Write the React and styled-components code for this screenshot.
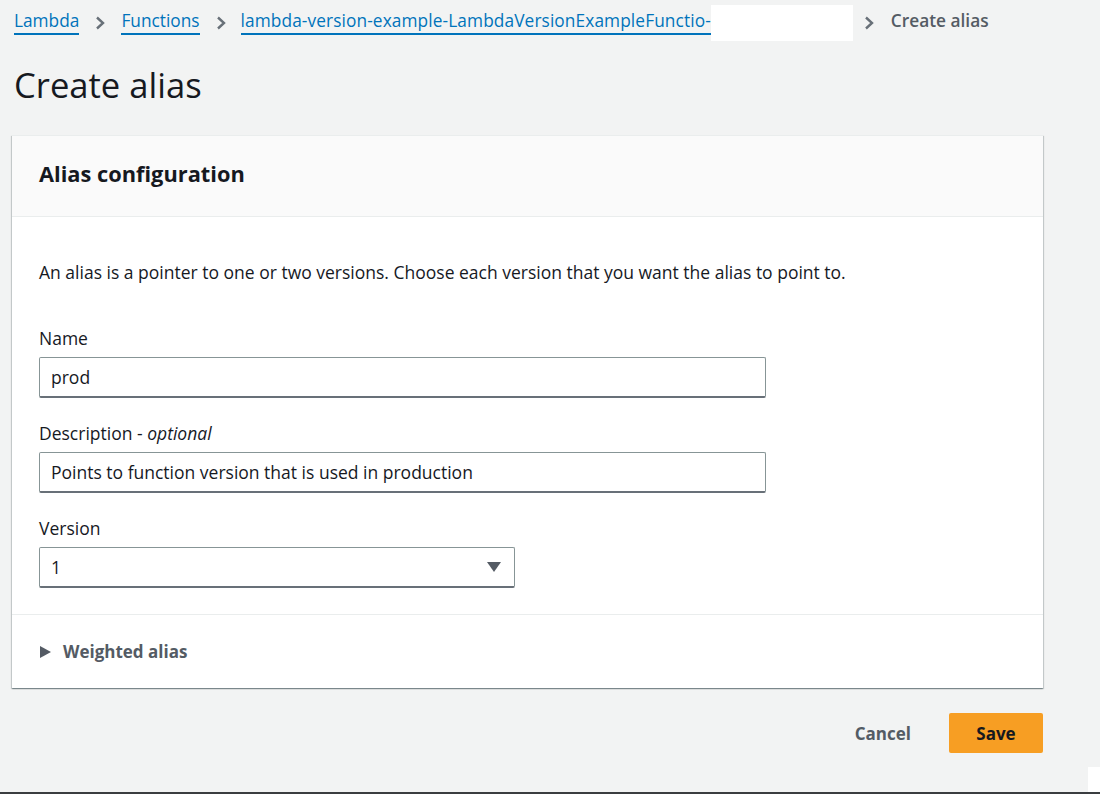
import React from 'react';
import styled, { createGlobalStyle } from 'styled-components';

const GlobalStyle = createGlobalStyle`
  html, body {
    margin: 0;
    padding: 0;
    background: #f2f3f3;
  }
  body {
    font-family: "Open Sans", "Noto Sans", Arial, sans-serif;
    color: #16191f;
  }
`;

const Page = styled.div`
  width: 1100px;
  height: 794px;
  box-sizing: border-box;
  padding: 8px 57px 0 12px;
  position: relative;
  overflow: hidden;
  border-bottom: 2px solid #3a3d40;
`;

const Crumbs = styled.nav`
  display: flex;
  align-items: center;
  height: 30px;
  padding-left: 2px;
  font-size: 17.3px;
`;

const Crumb = styled.a`
  color: #0073bb;
  text-decoration: none;
  border-bottom: 2px solid #0073bb;
  line-height: 20px;
  padding-bottom: 2px;
  white-space: nowrap;
  letter-spacing: ${(p) => (p.$wide ? '0.1px' : '0')};
`;

const Redact = styled.span`
  display: inline-block;
  width: 142px;
  height: 36px;
  background: #fff;
`;

const Current = styled.span`
  color: #545b64;
  font-weight: 600;
  line-height: 20px;
  padding-bottom: 4px;
`;

const Chevron = styled.svg`
  width: 12px;
  height: 14px;
  margin: 0 ${(p) => p.$gap || 10}px 0 ${(p) => p.$left || 10}px;
  flex: none;
`;

const Title = styled.h1`
  margin: 26px 0 0 2px;
  font-size: 34.6px;
  font-weight: 400;
  line-height: 42px;
  color: #16191f;
`;

const Card = styled.section`
  margin-top: 29px;
  background: #fff;
  box-shadow: 0 1px 1px 0 rgba(0, 28, 36, 0.3), 1px 1px 1px 0 rgba(0, 28, 36, 0.15),
    -1px 1px 1px 0 rgba(0, 28, 36, 0.15);
  border-top: 1px solid #eaeded;
`;

const CardHeader = styled.header`
  height: 80px;
  background: #fafafa;
  border-bottom: 1px solid #eaeded;
  display: flex;
  align-items: center;
  padding: 0 27px;
`;

const CardTitle = styled.h2`
  margin: -5px 0 0;
  font-size: 21.8px;
  font-weight: 700;
  color: #16191f;
`;

const CardBody = styled.div`
  padding: 44px 27px 26px;
  display: flex;
  flex-direction: column;
`;

const Intro = styled.p`
  margin: 0 0 44px;
  font-size: 17.5px;
  line-height: 22px;
  color: #16191f;
  white-space: nowrap;
`;

const Field = styled.div`
  display: flex;
  flex-direction: column;
  margin-bottom: ${(p) => (p.$last ? 0 : 24)}px;
`;

const Label = styled.label`
  font-size: 17.5px;
  line-height: 22px;
  margin-bottom: 8px;
  color: #16191f;

  em {
    font-style: italic;
    color: #16191f;
  }
`;

const Input = styled.div`
  box-sizing: border-box;
  width: ${(p) => p.$width}px;
  height: 41px;
  border: 1px solid #879596;
  border-bottom: 2px solid #687078;
  border-radius: 2px;
  background: #fff;
  padding: 0 11px;
  display: flex;
  align-items: center;
  justify-content: space-between;
  font-size: 17.5px;
  color: #16191f;
`;

const Caret = styled.svg`
  width: 14px;
  height: 10px;
  margin-right: 2px;
`;

const Expander = styled.div`
  border-top: 1px solid #eaeded;
  height: 73px;
  display: flex;
  align-items: center;
  padding: 0 28px;
  gap: 12px;
  font-size: 17px;
  font-weight: 700;
  color: #545b64;
`;

const Triangle = styled.svg`
  width: 11px;
  height: 12px;
`;

const Actions = styled.div`
  display: flex;
  justify-content: flex-end;
  align-items: center;
  margin-top: 25px;
  gap: 38px;
`;

const LinkButton = styled.button`
  border: none;
  background: none;
  font-family: inherit;
  font-size: 17px;
  font-weight: 700;
  color: #545b64;
  padding: 0;
  cursor: pointer;
`;

const PrimaryButton = styled.button`
  border: none;
  border-radius: 2px;
  background: #f79e23;
  font-family: inherit;
  font-size: 17px;
  font-weight: 700;
  color: #16191f;
  width: 94px;
  height: 40px;
  cursor: pointer;
`;

const CornerPatch = styled.div`
  position: absolute;
  right: 0;
  bottom: 0;
  width: 12px;
  height: 25px;
  background: #fff;
`;

const ChevronIcon = (props) => (
  <Chevron viewBox="0 0 12 14" {...props}>
    <path d="M3 1.5 L9 7 L3 12.5" fill="none" stroke="#687078" strokeWidth="2.4" />
  </Chevron>
);

export default function App() {
  return (
    <>
      <GlobalStyle />
      <Page>
        <Crumbs>
          <Crumb href="#">Lambda</Crumb>
          <ChevronIcon $left={15} $gap={15} />
          <Crumb href="#">Functions</Crumb>
          <ChevronIcon $left={15} $gap={14} />
          <Crumb href="#" $wide>
            lambda-version-example-LambdaVersionExampleFunctio-
          </Crumb>
          <Redact />
          <ChevronIcon $left={10} $gap={16} />
          <Current>Create alias</Current>
        </Crumbs>

        <Title>Create alias</Title>

        <Card>
          <CardHeader>
            <CardTitle>Alias configuration</CardTitle>
          </CardHeader>
          <CardBody>
            <Intro>
              An alias is a pointer to one or two versions. Choose each version that you want
              the alias to point to.
            </Intro>
            <Field>
              <Label>Name</Label>
              <Input $width={727}>prod</Input>
            </Field>
            <Field>
              <Label>
                Description - <em>optional</em>
              </Label>
              <Input $width={727}>Points to function version that is used in production</Input>
            </Field>
            <Field $last>
              <Label>Version</Label>
              <Input $width={476}>
                <span>1</span>
                <Caret viewBox="0 0 14 10">
                  <path d="M0 0 H14 L7 10 Z" fill="#545b64" />
                </Caret>
              </Input>
            </Field>
          </CardBody>
          <Expander>
            <Triangle viewBox="0 0 11 12">
              <path d="M0 0 L11 6 L0 12 Z" fill="#545b64" />
            </Triangle>
            Weighted alias
          </Expander>
        </Card>

        <Actions>
          <LinkButton>Cancel</LinkButton>
          <PrimaryButton>Save</PrimaryButton>
        </Actions>
        <CornerPatch />
      </Page>
    </>
  );
}
